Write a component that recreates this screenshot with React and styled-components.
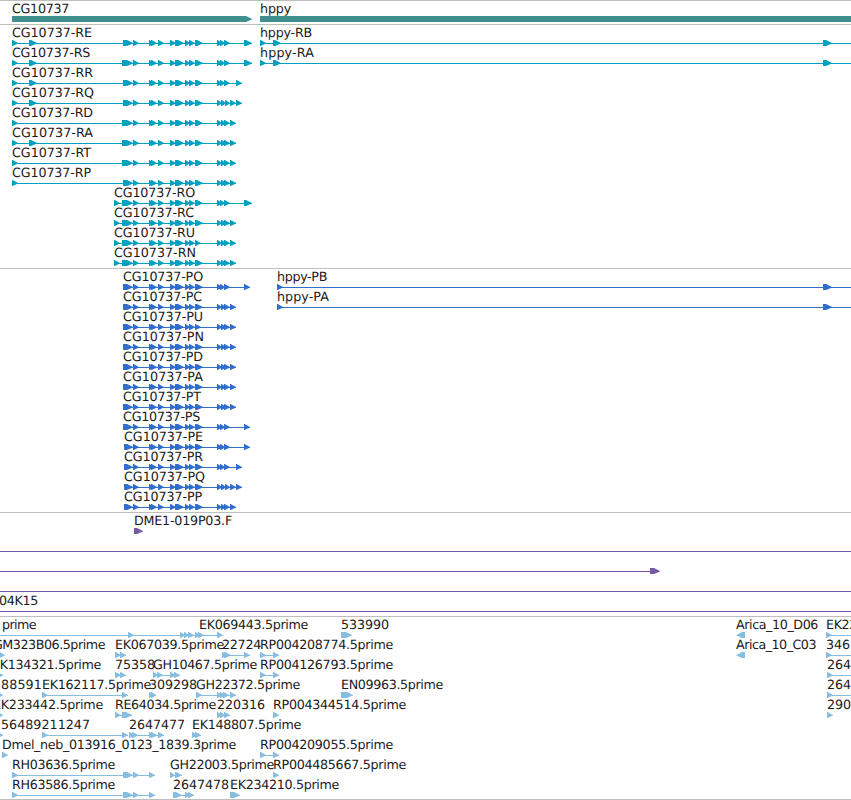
import React from 'react';
import styled, { createGlobalStyle } from 'styled-components';

const WIDTH = 851;
const HEAD = 6;
const FONT = '12.7px "DejaVu Sans", sans-serif';

const GlobalStyle = createGlobalStyle`
  body {
    margin: 0;
    background: #fff;
    overflow: hidden;
  }
`;

const Browser = styled.main`
  display: flex;
  flex-direction: column;
  width: ${WIDTH}px;
  height: 800px;
  overflow: hidden;
  background: #fff;
`;

const TrackBox = styled.section`
  border-top: 1px solid #bebebe;
  padding-bottom: ${(p) => p.$gap}px;
  color: ${(p) => p.$color};

  &:last-child {
    border-bottom: 1px solid #bebebe;
  }
`;

const Lane = styled.div`
  position: relative;
  height: 20px;
`;

const Label = styled.span`
  position: absolute;
  top: 0;
  left: ${(p) => p.$x}px;
  font: ${FONT};
  line-height: 16px;
  letter-spacing: ${(p) => p.$spacing}px;
  white-space: pre;
  color: #1a1a1a;
  text-rendering: geometricPrecision;
`;

const Glyphs = styled.svg`
  position: absolute;
  top: 0;
  left: 0;
  display: block;
  overflow: visible;
`;

const ctx = document.createElement('canvas').getContext('2d');

// letter spacing that makes a name end at the given x
function spacingFor(text, width) {
  ctx.font = FONT;
  return ((width - ctx.measureText(text).width) / text.length).toFixed(3);
}

function exonPoints(start, end, reverse) {
  if (reverse) {
    return `${end},15 ${start + HEAD},15 ${start},18.3 ${start + HEAD},21 ${end},21`;
  }
  const neck = Math.max(start + 0.6, end - HEAD);
  return `${start},15 ${neck},15 ${end},18 ${end},18.6 ${neck},21 ${start},21`;
}

function Feature({ name, x, to, exons = [], line, reverse }) {
  let span = line;
  if (!span && exons.length > 1) {
    span = [exons[0][0], exons[exons.length - 1][1]];
  }
  return (
    <>
      {name && (
        <Label $x={x} $spacing={spacingFor(name, to - x)}>
          {name}
        </Label>
      )}
      <Glyphs width={WIDTH} height="22" fill="currentColor">
        {span && <rect x={span[0]} y="18" width={span[1] - span[0]} height="1" />}
        {exons.map(([a, b], i) => (
          <polygon key={i} points={exonPoints(a, b, reverse)} />
        ))}
      </Glyphs>
    </>
  );
}

function Track({ color, lanes, gap = 3 }) {
  return (
    <TrackBox $color={color} $gap={gap}>
      {lanes.map((features, i) => (
        <Lane key={i}>
          {features.map((f, j) => (
            <Feature key={j} {...f} />
          ))}
        </Lane>
      ))}
    </TrackBox>
  );
}

const f = (name, x, to, exons, more) => ({ name, x, to, exons, ...more });

// the exons that all CG10737 forms share
const middle = [
  [133, 139], [149, 154], [151, 157], [158, 164], [170, 176], [175, 184],
  [185, 190], [189, 195],
];
const tails = {
  long: [[217, 222], [220, 225], [224, 230], [244, 252]],
  coding: [[217, 222], [220, 225], [224, 230], [244, 250]],
  mid: [[217, 222], [220, 225], [224, 230], [236, 242]],
  dense: [[217, 222], [221, 226], [225, 230], [230, 236], [236, 242]],
  short: [[217, 222], [221, 226], [224, 230], [230, 236]],
};

function form(name, x, to, head, tail, last = 203) {
  return f(name, x, to, [...head, ...middle, [195, last], ...tails[tail]]);
}

const a = [12, 18];
const b = [29, 37];
const c = [114, 120];
const d = [122, 133];
const e = [123, 133];
const g = [124, 133];

const genes = [
  [
    f('CG10737', 12, 69, [[12, 252]]),
    f('hppy', 260, 291, [[260, 900]]),
  ],
];

const transcripts = [
  [
    form('CG10737-RE', 12, 92, [a, b, e], 'long'),
    f('hppy-RB', 260, 312, [[260, 266], [273, 281], [823, 832]], { line: [260, WIDTH] }),
  ],
  [
    form('CG10737-RS', 12, 90, [a, b, d], 'long'),
    f('hppy-RA', 260, 314, [[260, 266], [273, 281], [823, 832]], { line: [260, WIDTH] }),
  ],
  [form('CG10737-RR', 12, 93, [a, b, e], 'mid')],
  [form('CG10737-RQ', 12, 94, [a, b, e], 'dense')],
  [form('CG10737-RD', 12, 93, [a, d], 'short')],
  [form('CG10737-RA', 12, 93, [a, b, d], 'short')],
  [form('CG10737-RT', 12, 91, [a, d], 'short')],
  [form('CG10737-RP', 12, 91, [a, e], 'short')],
  [form('CG10737-RO', 114, 195, [c, d], 'long')],
  [form('CG10737-RC', 114, 194, [c, d], 'short')],
  [form('CG10737-RU', 114, 195, [c, d], 'short', 201)],
  [form('CG10737-RN', 114, 196, [c, d], 'short')],
];

const proteins = [
  [
    form('CG10737-PO', 123, 203, [e], 'coding'),
    f('hppy-PB', 277, 327, [[277, 283], [823, 832]], { line: [277, WIDTH] }),
  ],
  [
    form('CG10737-PC', 123, 202, [e], 'short'),
    f('hppy-PA', 277, 329, [[277, 283], [823, 832]], { line: [277, WIDTH] }),
  ],
  [form('CG10737-PU', 123, 203, [e], 'short', 201)],
  [form('CG10737-PN', 123, 204, [e], 'short')],
  [form('CG10737-PD', 123, 203, [e], 'short')],
  [form('CG10737-PA', 123, 203, [e], 'short')],
  [form('CG10737-PT', 123, 201, [e], 'short')],
  [form('CG10737-PS', 123, 200, [e], 'coding')],
  [form('CG10737-PE', 124, 203, [g], 'coding')],
  [form('CG10737-PR', 124, 203, [g], 'mid')],
  [form('CG10737-PQ', 124, 205, [g], 'dense')],
  [form('CG10737-PP', 124, 202, [g], 'short')],
];

const clones = [
  [f('DME1-019P03.F', 134, 232, [[134, 143]])],
  [{ line: [0, WIDTH] }],
  [{ line: [0, 655], exons: [[650, 660]] }],
  [{ line: [0, WIDTH] }],
  [f('04K15', -1, 38, [], { line: [0, WIDTH] })],
];

const pair = [[260, 266], [273, 279]];

const ests = [
  [
    f('prime', 2, 36, [
      [128, 134], [180, 185], [184, 189], [188, 194], [195, 200], [198, 204], [217, 223],
    ], { line: [0, 220] }),
    f('EK069443.5prime', 199, 308, []),
    f('533990', 341, 389, [[341, 352]]),
    f('Arica_10_D06', 736, 818, [[736, 745]], { reverse: true }),
    f('EK22', 826, 857, [[826, 832]], { line: [826, WIDTH] }),
  ],
  [
    f('GM323B06.5prime', -7, 105, [[-1, 5]]),
    f('EK067039.5prime', 115, 224, [[115, 121], [120, 126]]),
    f('22724', 222, 261, [[222, 227], [224, 231], [244, 250]]),
    f('RP004208774.5prime', 260, 393, pair),
    f('Arica_10_C03', 736, 816, [[736, 745]], { reverse: true }),
    f('346', 826, 850, [[826, 832]], { line: [826, WIDTH] }),
  ],
  [
    f('EK134321.5prime', -8, 101, [[-3, 3]]),
    f('75358', 115, 155, [[115, 121], [120, 126]]),
    f('GH10467.5prime', 153, 257, [[153, 158], [157, 163], [170, 176], [174, 180]]),
    f('RP004126793.5prime', 260, 393, pair),
    f('264', 827, 851, [[827, 833]], { line: [827, WIDTH] }),
  ],
  [
    f('88591', 1, 42, [[-3, 3]]),
    f('EK162117.5prime', 42, 151, [[42, 48], [122, 128]]),
    f('309298', 149, 197, [[149, 154], [151, 156]]),
    f('GH22372.5prime', 196, 300, [[196, 202], [217, 222], [220, 225], [223, 229], [230, 236]]),
    f('EN09963.5prime', 341, 443, [[341, 353]]),
    f('264', 827, 851, [[827, 833]], { line: [827, WIDTH] }),
  ],
  [
    f('EK233442.5prime', -7, 103, [[-3, 3]]),
    f('RE64034.5prime', 115, 216, [[115, 121], [122, 132]]),
    f('220316', 217, 265, [[217, 222], [220, 225], [224, 230]]),
    f('RP004344514.5prime', 273, 406, [[273, 279]]),
    f('290', 827, 851, [[827, 833]]),
  ],
  [
    f('56489211247', 1, 90, [[-3, 3]]),
    { exons: [[42, 48], [122, 128]] },
    f('2647477', 129, 185, [[129, 134], [132, 138], [149, 154], [151, 157], [158, 164]]),
    f('EK148807.5prime', 192, 301, [[192, 197], [195, 201]]),
  ],
  [
    f('Dmel_neb_013916_0123_1839.3prime', 2, 236, [[2, 8]]),
    f('RP004209055.5prime', 260, 393, pair),
  ],
  [
    f('RH03636.5prime', 12, 115, [[12, 18], [123, 133], [133, 139], [149, 155]]),
    f('GH22003.5prime', 170, 274, [[170, 175], [175, 182]]),
    f('RP004485667.5prime', 273, 406, [[273, 279]]),
  ],
  [
    f('RH63586.5prime', 12, 115, [[12, 18], [123, 133], [133, 139], [149, 155]]),
    f('2647478', 173, 229, [[173, 182], [185, 190], [188, 194]]),
    f('EK234210.5prime', 230, 339, [[230, 240]]),
  ],
];

function App() {
  return (
    <>
      <GlobalStyle />
      <Browser>
        <Track color="#408f90" lanes={genes} />
        <Track color="#00a0c0" lanes={transcripts} />
        <Track color="#306dcd" lanes={proteins} />
        <Track color="#7558a8" lanes={clones} />
        <Track color="#87bddf" lanes={ests} gap={2} />
      </Browser>
    </>
  );
}

export default App;
